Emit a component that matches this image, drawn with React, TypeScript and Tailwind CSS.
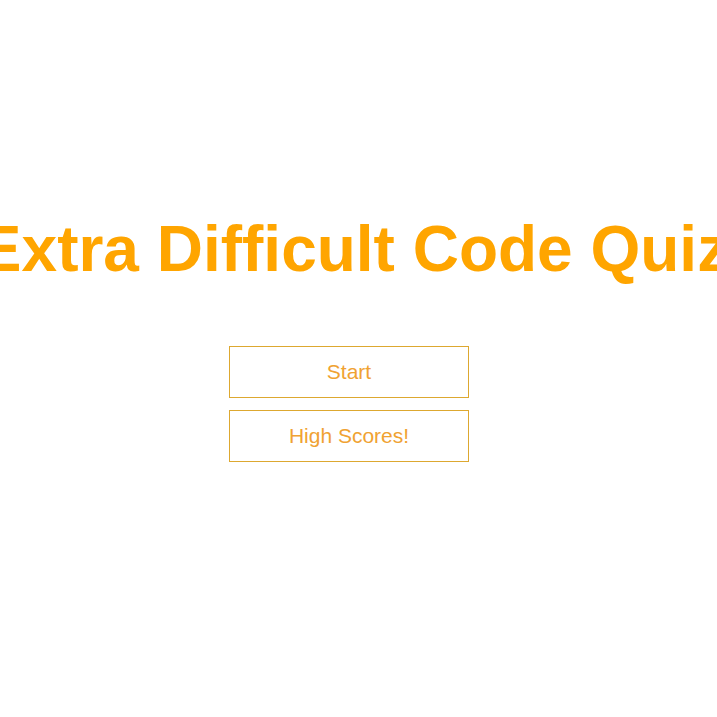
import React from "react";

export default function App() {
  return (
    <div
      className="w-[717px] h-[717px] bg-white overflow-hidden"
      style={{ fontFamily: '"Liberation Sans", Arial, sans-serif' }}
    >
      <div className="pt-[212px] w-[708px] flex justify-center">
        <h1 className="whitespace-nowrap shrink-0 text-[64px] leading-[74px] font-bold text-[#FFA500]">
          Extra Difficult Code Quiz
        </h1>
      </div>
      <div className="w-[698px] mt-[60px] flex flex-col items-center gap-[12px]">
        <button className="w-[240px] h-[52px] border border-[#DDA830] text-[#F0A232] text-[21px] leading-[24px] bg-white">
          Start
        </button>
        <button className="w-[240px] h-[52px] border border-[#DDA830] text-[#F0A232] text-[21px] leading-[24px] bg-white">
          High Scores!
        </button>
      </div>
    </div>
  );
}
